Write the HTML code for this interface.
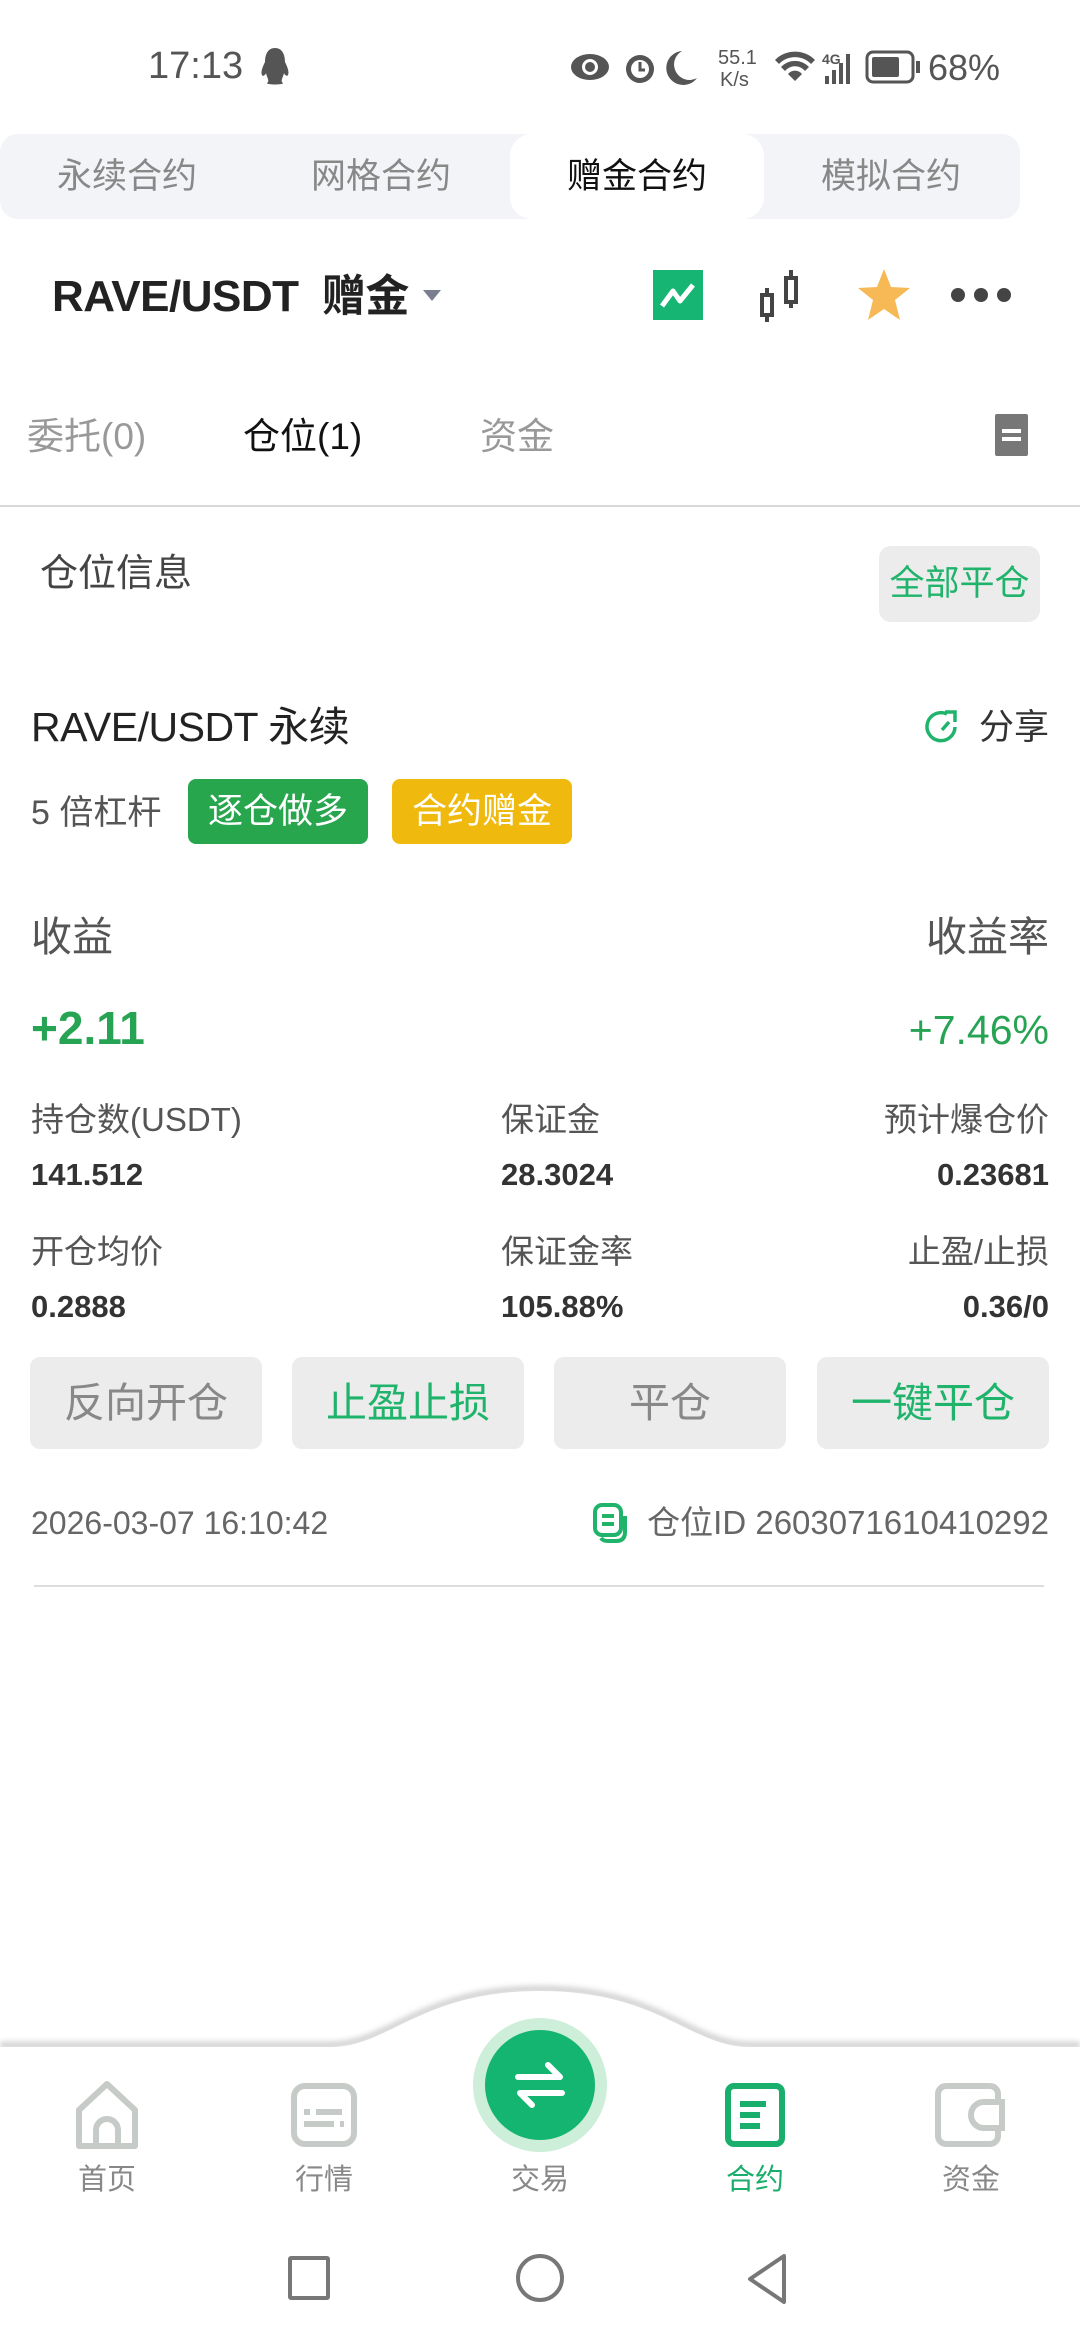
<!DOCTYPE html>
<html><head><meta charset="utf-8"><style>
*{margin:0;padding:0;box-sizing:border-box}
body{width:1080px;height:2340px;background:#fff;position:relative;overflow:hidden;font-family:"Liberation Sans","Noto Sans CJK SC",sans-serif;color:#222}
.a{position:absolute;white-space:nowrap}
.c{text-align:center}
.r{text-align:right}
.g{color:#1fb36b}
</style></head><body>
<!-- status bar -->
<div class="a" style="left:148px;top:44px;height:44px;line-height:44px;font-size:38px;color:#555">17:13</div>
<svg class="a" style="left:258px;top:46px" width="34" height="40" viewBox="0 0 34 40"><path d="M17 2C9 2 7 10 7 16 4 22 2 28 5 30 7 29 8 28 8 27 9 32 12 35 9 37 8 39 26 39 25 37 22 35 25 32 26 27 26 28 27 29 29 30 32 28 30 22 27 16 27 10 25 2 17 2Z" fill="#555"/></svg>
<svg class="a" style="left:570px;top:46px" width="480" height="42" viewBox="0 0 480 42">
<g fill="#555"><ellipse cx="20" cy="21" rx="19" ry="13"/><circle cx="20" cy="21" r="8" fill="#fff"/><circle cx="20" cy="21" r="5"/>
<circle cx="70" cy="23" r="14"/><circle cx="70" cy="23" r="9" fill="#fff"/><path d="M70 16v8h5" stroke="#555" stroke-width="3" fill="none"/>
<path d="M112 5a17 17 0 1 0 15 27A14 14 0 0 1 112 5Z"/>
<text x="148" y="18" font-size="20" font-family="Liberation Sans">55.1</text><text x="150" y="40" font-size="20" font-family="Liberation Sans">K/s</text>
<path d="M205 14a28 28 0 0 1 40 0l-4 4a22 22 0 0 0-32 0z M211 21a19 19 0 0 1 28 0l-4 4a13 13 0 0 0-20 0z M218 28a9 9 0 0 1 14 0l-7 7z"/>
<text x="252" y="18" font-size="14" font-weight="bold" font-family="Liberation Sans">4G</text>
<rect x="255" y="30" width="4" height="8"/><rect x="262" y="24" width="4" height="14"/><rect x="269" y="17" width="4" height="21"/><rect x="276" y="8" width="4" height="30"/>
<rect x="297" y="6" width="46" height="30" rx="6" fill="none" stroke="#555" stroke-width="3"/><rect x="302" y="11" width="27" height="20" rx="2"/><rect x="346" y="15" width="4" height="12"/>
<text x="358" y="34" font-size="36" font-family="Liberation Sans">68%</text></g></svg>
<!-- top tabs -->
<div class="a" style="left:0;top:134px;width:1020px;height:85px;background:#f3f4f7;border-radius:18px"></div>
<div class="a" style="left:510px;top:134px;width:254px;height:85px;background:#fff;border-radius:22px"></div>
<div class="a c" style="left:0;top:134px;width:254px;height:85px;line-height:85px;font-size:35px;color:#888">永续合约</div>
<div class="a c" style="left:254px;top:134px;width:254px;height:85px;line-height:85px;font-size:35px;color:#888">网格合约</div>
<div class="a c" style="left:510px;top:134px;width:254px;height:85px;line-height:85px;font-size:35px;color:#111">赠金合约</div>
<div class="a c" style="left:764px;top:134px;width:254px;height:85px;line-height:85px;font-size:35px;color:#888">模拟合约</div>
<!-- title -->
<div class="a" style="left:52px;top:270px;height:54px;line-height:54px;font-size:44px;font-weight:bold;color:#222;letter-spacing:-0.5px">RAVE/USDT&nbsp; 赠金</div>
<div class="a" style="left:423px;top:290px;width:0;height:0;border-left:9px solid transparent;border-right:9px solid transparent;border-top:11px solid #7a7f90"></div>
<svg class="a" style="left:650px;top:266px" width="56" height="58" viewBox="0 0 56 58"><rect x="3" y="4" width="50" height="50" fill="#17b574"/><path d="M12 40l11-15 7 10 13-16" stroke="#fff" stroke-width="5" fill="none" stroke-linejoin="round"/></svg>
<svg class="a" style="left:758px;top:268px" width="48" height="60" viewBox="0 0 48 60"><g stroke="#444" stroke-width="4" fill="none"><rect x="4" y="27" width="10" height="20"/><path d="M9 20v7M9 47v7"/><rect x="28" y="10" width="10" height="24"/><path d="M33 2v8M33 34v6"/></g></svg>
<svg class="a" style="left:856px;top:266px" width="56" height="58" viewBox="0 0 56 58"><path d="M28 3l7 18 19 1-15 12 5 20-16-11-16 11 5-20L2 22l19-1z" fill="#f7b955"/></svg>
<svg class="a" style="left:948px;top:280px" width="66" height="30" viewBox="0 0 66 30"><g fill="#444"><circle cx="10" cy="15" r="7"/><circle cx="33" cy="15" r="7"/><circle cx="56" cy="15" r="7"/></g></svg>
<!-- sub tabs -->
<div class="a" style="left:27px;top:414px;height:46px;line-height:46px;font-size:37px;color:#999">委托(0)</div>
<div class="a" style="left:243px;top:414px;height:46px;line-height:46px;font-size:37px;color:#111">仓位(1)</div>
<div class="a" style="left:480px;top:414px;height:46px;line-height:46px;font-size:37px;color:#999">资金</div>
<svg class="a" style="left:994px;top:412px" width="36" height="46" viewBox="0 0 36 46"><rect x="1" y="2" width="33" height="42" rx="2" fill="#777"/><rect x="8" y="17" width="19" height="4" fill="#fff"/><rect x="8" y="25" width="19" height="4" fill="#fff"/></svg>
<div class="a" style="left:0;top:505px;width:1080px;height:2px;background:#d8d8d8"></div>
<!-- position info -->
<div class="a" style="left:40px;top:551px;height:46px;line-height:46px;font-size:38px;color:#444">仓位信息</div>
<div class="a c g" style="left:879px;top:546px;width:161px;height:76px;line-height:76px;background:#ececec;border-radius:12px;font-size:35px">全部平仓</div>
<div class="a" style="left:31px;top:700px;height:54px;line-height:54px;font-size:41px;color:#222;letter-spacing:-0.5px">RAVE/USDT 永续</div>
<svg class="a" style="left:924px;top:708px" width="36" height="38" viewBox="0 0 36 38"><path d="M23 6A14 14 0 1 0 31 19" stroke="#1fb36b" stroke-width="3.5" fill="none"/><path d="M18 22l7-8" stroke="#1fb36b" stroke-width="3.5"/><path d="M21 4h10v10" stroke="#1fb36b" stroke-width="3.5" fill="none"/></svg>
<div class="a" style="left:979px;top:706px;height:44px;line-height:44px;font-size:35px;color:#333">分享</div>
<div class="a" style="left:31px;top:791px;height:44px;line-height:44px;font-size:34px;color:#555">5 倍杠杆</div>
<div class="a c" style="left:188px;top:779px;width:180px;height:65px;line-height:65px;background:#27a64e;border-radius:8px;color:#fff;font-size:35px">逐仓做多</div>
<div class="a c" style="left:392px;top:779px;width:180px;height:65px;line-height:65px;background:#efb90e;border-radius:8px;color:#fff;font-size:35px">合约赠金</div>
<div class="a" style="left:31px;top:912px;height:50px;line-height:50px;font-size:41px;color:#555">收益</div>
<div class="a r" style="right:31px;top:912px;height:50px;line-height:50px;font-size:41px;color:#555">收益率</div>
<div class="a" style="left:31px;top:1001px;height:54px;line-height:54px;font-size:46px;font-weight:bold;color:#26a454">+2.11</div>
<div class="a r" style="right:31px;top:1003px;height:54px;line-height:54px;font-size:41px;color:#26a454">+7.46%</div>
<!-- grid -->
<div class="a" style="left:31px;top:1099px;height:42px;line-height:42px;font-size:33px;color:#555">持仓数(USDT)</div>
<div class="a" style="left:501px;top:1099px;height:42px;line-height:42px;font-size:33px;color:#555">保证金</div>
<div class="a r" style="right:31px;top:1099px;height:42px;line-height:42px;font-size:33px;color:#555">预计爆仓价</div>
<div class="a" style="left:31px;top:1156px;height:38px;line-height:38px;font-size:31px;font-weight:bold;color:#333">141.512</div>
<div class="a" style="left:501px;top:1156px;height:38px;line-height:38px;font-size:31px;font-weight:bold;color:#333">28.3024</div>
<div class="a r" style="right:31px;top:1156px;height:38px;line-height:38px;font-size:31px;font-weight:bold;color:#333">0.23681</div>
<div class="a" style="left:31px;top:1231px;height:42px;line-height:42px;font-size:33px;color:#555">开仓均价</div>
<div class="a" style="left:501px;top:1231px;height:42px;line-height:42px;font-size:33px;color:#555">保证金率</div>
<div class="a r" style="right:31px;top:1231px;height:42px;line-height:42px;font-size:33px;color:#555">止盈/止损</div>
<div class="a" style="left:31px;top:1288px;height:38px;line-height:38px;font-size:31px;font-weight:bold;color:#333">0.2888</div>
<div class="a" style="left:501px;top:1288px;height:38px;line-height:38px;font-size:31px;font-weight:bold;color:#333">105.88%</div>
<div class="a r" style="right:31px;top:1288px;height:38px;line-height:38px;font-size:31px;font-weight:bold;color:#333">0.36/0</div>
<!-- buttons -->
<div class="a c" style="left:30px;top:1357px;width:232px;height:92px;line-height:92px;background:#ececec;border-radius:10px;font-size:41px;color:#888">反向开仓</div>
<div class="a c g" style="left:292px;top:1357px;width:232px;height:92px;line-height:92px;background:#ececec;border-radius:10px;font-size:41px">止盈止损</div>
<div class="a c" style="left:554px;top:1357px;width:232px;height:92px;line-height:92px;background:#ececec;border-radius:10px;font-size:41px;color:#888">平仓</div>
<div class="a c g" style="left:817px;top:1357px;width:232px;height:92px;line-height:92px;background:#ececec;border-radius:10px;font-size:41px">一键平仓</div>
<div class="a" style="left:31px;top:1503px;height:40px;line-height:40px;font-size:32px;color:#666">2026-03-07 16:10:42</div>
<svg class="a" style="left:592px;top:1502px" width="36" height="42" viewBox="0 0 36 42"><rect x="3" y="3" width="26" height="30" rx="7" fill="none" stroke="#1fb36b" stroke-width="4"/><path d="M9 36c2 3 5 3 8 3h7c6 0 9-3 9-9V14" fill="none" stroke="#1fb36b" stroke-width="4"/><path d="M10 14h12M10 22h12" stroke="#1fb36b" stroke-width="4"/></svg>
<div class="a r" style="right:31px;top:1502px;height:42px;line-height:42px;font-size:33px;color:#666">仓位ID 2603071610410292</div>
<div class="a" style="left:34px;top:1585px;width:1010px;height:2px;background:#ddd"></div>
<!-- bottom nav -->
<svg class="a" style="left:0;top:1975px" width="1080" height="80" viewBox="0 0 1080 80"><defs><filter id="sh" x="-5%" y="-50%" width="110%" height="200%"><feGaussianBlur stdDeviation="3"/></filter></defs>
<path d="M0 70H330C390 70 420 14 540 14S690 70 750 70H1080" stroke="#ccc" stroke-width="6" fill="none" filter="url(#sh)"/>
<path d="M0 72H330C390 72 420 16 540 16S690 72 750 72H1080V80H0Z" fill="#fff"/></svg>
<div class="a" style="left:0;top:2048px;width:1080px;height:292px;background:#fff"></div>
<div class="a" style="left:473px;top:2018px;width:134px;height:134px;border-radius:50%;background:#cdeed8"></div>
<div class="a" style="left:485px;top:2030px;width:110px;height:110px;border-radius:50%;background:#14b570"></div>
<svg class="a" style="left:510px;top:2055px" width="60" height="60" viewBox="0 0 60 60"><path d="M8 22h42L38 10M52 38H10l12 12" stroke="#fff" stroke-width="6" fill="none" stroke-linecap="round" stroke-linejoin="round"/></svg>
<svg class="a" style="left:74px;top:2080px" width="66" height="72" viewBox="0 0 66 72"><path d="M5 30L33 4l28 26v36H5z" fill="none" stroke="#c6cbc7" stroke-width="6" stroke-linejoin="round"/><path d="M22 66V50a11 11 0 0 1 22 0v16" fill="none" stroke="#c6cbc7" stroke-width="6"/></svg>
<svg class="a" style="left:290px;top:2082px" width="68" height="66" viewBox="0 0 68 66"><rect x="4" y="4" width="60" height="58" rx="11" fill="none" stroke="#c6cbc7" stroke-width="6"/><path d="M14 30h6M26 30h26M14 42h30M50 42h4" stroke="#c6cbc7" stroke-width="6"/></svg>
<svg class="a" style="left:724px;top:2082px" width="62" height="66" viewBox="0 0 62 66"><rect x="4" y="4" width="54" height="58" rx="6" fill="none" stroke="#1aae6c" stroke-width="6"/><path d="M16 22h26M16 33h20M16 44h20" stroke="#1aae6c" stroke-width="6"/></svg>
<svg class="a" style="left:934px;top:2082px" width="74" height="66" viewBox="0 0 74 66"><path d="M64 20V12a8 8 0 0 0-8-8H12a8 8 0 0 0-8 8v42a8 8 0 0 0 8 8h44a8 8 0 0 0 8-8V46" fill="none" stroke="#c6cbc7" stroke-width="6"/><path d="M68 20H50a13 13 0 0 0 0 26h18z" fill="none" stroke="#c6cbc7" stroke-width="6"/></svg>
<div class="a c" style="left:57px;top:2160px;width:100px;height:40px;line-height:40px;font-size:29px;color:#888">首页</div>
<div class="a c" style="left:274px;top:2160px;width:100px;height:40px;line-height:40px;font-size:29px;color:#888">行情</div>
<div class="a c" style="left:490px;top:2160px;width:100px;height:40px;line-height:40px;font-size:29px;color:#888">交易</div>
<div class="a c" style="left:705px;top:2160px;width:100px;height:40px;line-height:40px;font-size:29px;color:#1aae6c">合约</div>
<div class="a c" style="left:921px;top:2160px;width:100px;height:40px;line-height:40px;font-size:29px;color:#888">资金</div>
<!-- system nav -->
<div class="a" style="left:288px;top:2256px;width:42px;height:44px;border:4px solid #777;border-radius:3px"></div>
<div class="a" style="left:516px;top:2254px;width:48px;height:48px;border:4px solid #777;border-radius:50%"></div>
<svg class="a" style="left:744px;top:2252px" width="46" height="54" viewBox="0 0 46 54"><path d="M40 4L6 27l34 23z" fill="none" stroke="#777" stroke-width="4" stroke-linejoin="round"/></svg>
</body></html>
